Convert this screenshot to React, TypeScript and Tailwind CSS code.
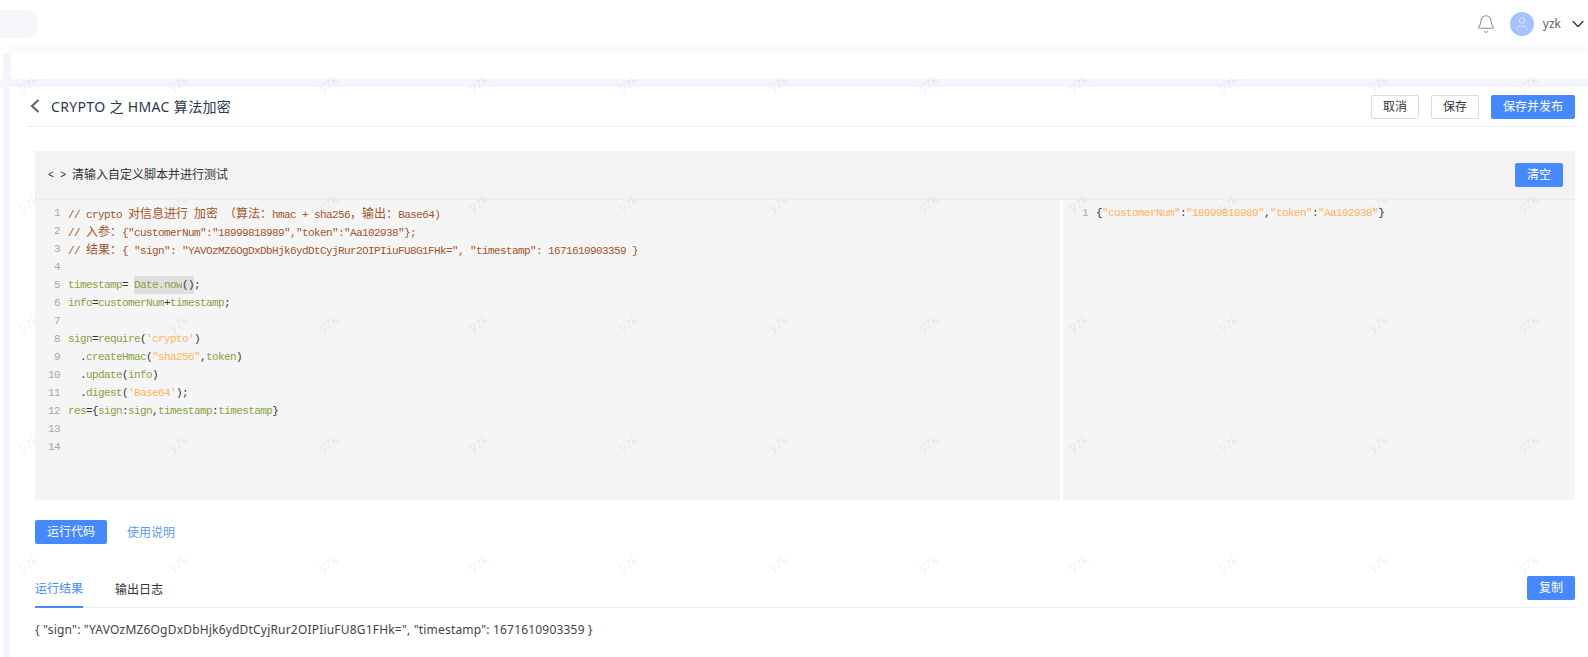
import { Bell, ChevronDown, User } from "lucide-react";

type Tone = "comment" | "green" | "orange" | "plain" | "hl" | "hlPlain";
type Token = [Tone, string];

const toneClass: Record<Tone, string> = {
  comment: "text-[#a0552c]",
  green: "text-[#86a447]",
  orange: "text-[#ffb35c]",
  plain: "text-[#333333]",
  hl: "inline-block h-[18px] bg-[#dfdfdf] text-[#86a447]",
  hlPlain: "inline-block h-[18px] bg-[#dfdfdf] text-[#333333]",
};

const scriptLines: Token[][] = [
  [["comment", "// crypto 对信息进行 加密 （算法：hmac + sha256，输出：Base64)"]],
  [["comment", '// 入参：{"customerNum":"18999818989","token":"Aa102938"};']],
  [["comment", '// 结果：{ "sign": "YAVOzMZ6OgDxDbHjk6ydDtCyjRur2OIPIiuFU8G1FHk=", "timestamp": 1671610903359 }']],
  [],
  [["green", "timestamp"], ["plain", "= "], ["hl", "Date.now"], ["hlPlain", "()"], ["plain", ";"]],
  [["green", "info"], ["plain", "="], ["green", "customerNum"], ["plain", "+"], ["green", "timestamp"], ["plain", ";"]],
  [],
  [["green", "sign"], ["plain", "="], ["green", "require"], ["plain", "("], ["orange", "'crypto'"], ["plain", ")"]],
  [["plain", "  ."], ["green", "createHmac"], ["plain", "("], ["orange", '"sha256"'], ["plain", ","], ["green", "token"], ["plain", ")"]],
  [["plain", "  ."], ["green", "update"], ["plain", "("], ["green", "info"], ["plain", ")"]],
  [["plain", "  ."], ["green", "digest"], ["plain", "("], ["orange", "'Base64'"], ["plain", ");"]],
  [["green", "res"], ["plain", "={"], ["green", "sign"], ["plain", ":"], ["green", "sign"], ["plain", ","], ["green", "timestamp"], ["plain", ":"], ["green", "timestamp"], ["plain", "}"]],
  [],
  [],
];

const inputLines: Token[][] = [
  [
    ["plain", "{"],
    ["orange", '"customerNum"'],
    ["plain", ":"],
    ["orange", '"18999818989"'],
    ["plain", ","],
    ["orange", '"token"'],
    ["plain", ":"],
    ["orange", '"Aa102938"'],
    ["plain", "}"],
  ],
];

// ascii runs on a 6px grid, chinese on 12px
function CodeText({ text }: { text: string }) {
  const parts = text.split(/([\u3000-\u9fff\uff00-\uffef]+)/);
  return (
    <>
      {parts.map((part, i) =>
        i % 2 === 1 ? (
          <span key={i} className="font-['Noto_Sans_CJK_SC',serif] text-[12px] tracking-normal">
            {part}
          </span>
        ) : (
          <span key={i}>{part}</span>
        ),
      )}
    </>
  );
}

function CodePane({ lines, className }: { lines: Token[][]; className: string }) {
  return (
    <div className={`bg-[#f5f5f5] pt-[4px] font-['Liberation_Mono',monospace] text-[11px] leading-[18px] tracking-[-0.6px] ${className}`}>
      {lines.map((tokens, i) => (
        <div key={i} className="flex h-[18px]">
          <span className="w-[25px] shrink-0 text-right text-[#a8a8a8]">{i + 1}</span>
          <span className="ml-[8px] whitespace-pre">
            {tokens.map(([tone, text], j) => (
              <span key={j} className={toneClass[tone]}>
                <CodeText text={text} />
              </span>
            ))}
          </span>
        </div>
      ))}
    </div>
  );
}

function Watermarks() {
  const rows = [83, 203, 323, 443, 563];
  const cols = Array.from({ length: 11 }, (_, i) => i);
  return (
    <div className="pointer-events-none absolute inset-0 z-20 overflow-hidden">
      {rows.map((y) =>
        cols.map((c) => (
          <span
            key={`${y}-${c}`}
            className="absolute -rotate-[30deg] font-['Noto_Sans',sans-serif] text-[14px] leading-none text-black/[0.07]"
            style={{ left: 18 + c * 150, top: y - 7 }}
          >
            yzk
          </span>
        )),
      )}
    </div>
  );
}

const primaryBtn = "h-[24px] rounded-[2px] bg-[#4689ff] text-[12px] text-white";
const ghostBtn = "h-[24px] w-[48px] rounded-[2px] border border-[#dcdcdc] bg-white text-[12px] text-[#333333]";

export default function App() {
  return (
    <div className="relative h-[657px] w-full overflow-hidden bg-white font-['Noto_Sans','Noto_Sans_CJK_SC',sans-serif] text-[#333333]">
      <Watermarks />

      <header className="relative z-10 flex h-[47px] items-center justify-between bg-white shadow-[0_4px_10px_rgba(0,0,0,0.035)]">
        <div className="h-[28px] w-[39px] rounded-r-[14px] bg-[#f5f6fa]" />
        <div className="flex items-center">
          <Bell className="h-[20px] w-[20px] text-[#8f8f8f]" strokeWidth={1.25} />
          <div className="ml-[14px] flex h-[24px] w-[24px] items-center justify-center rounded-full bg-[#a3c2ff]">
            <User className="h-[16px] w-[16px] text-[#e4edff]" strokeWidth={1.25} />
          </div>
          <span className="ml-[9px] text-[12px] text-[#666666]">yzk</span>
          <ChevronDown className="ml-[7px] h-[20px] w-[20px] text-[#333333]" strokeWidth={1.5} />
        </div>
      </header>

      <div className="h-[32px] pl-[3px] pt-[6px]">
        <div className="h-full w-[8px] rounded-t-[2px] bg-[#f3f5fa]" />
      </div>
      <div className="h-[8px] bg-[#f3f5fa]" />

      <div className="flex">
        <div className="ml-[3px] h-[570px] w-[7px] shrink-0 bg-[#f3f5fa]" />
        <main className="ml-[17px] w-[1548px]">
          <div className="flex h-[40px] justify-between border-b border-[#eeeeee] pt-[8px]">
            <div className="flex h-[22px] items-center">
              <svg viewBox="0 0 10 14" className="ml-[3px] h-[14px] w-[10px] text-[#666666]" fill="none" stroke="currentColor" strokeWidth="2.25">
                <path d="M8.5 1 L2 7 L8.5 13" />
              </svg>
              <h1 className="ml-[11px] text-[14px] font-normal tracking-[0.35px] text-[#2c3a4d]">CRYPTO 之 HMAC 算法加密</h1>
            </div>
            <div className="flex gap-[12px]">
              <button className={ghostBtn}>取消</button>
              <button className={ghostBtn}>保存</button>
              <button className={`${primaryBtn} w-[84px]`}>保存并发布</button>
            </div>
          </div>

          <section className="ml-[8px] mt-[24px] h-[349px] bg-[#f3f3f3]">
            <div className="flex h-[49px] items-center justify-between border-b border-[#ebebeb] pl-[13px] pr-[12px]">
              <div className="flex items-center text-[12px] text-[#333333]">
                <span className="w-[24px] whitespace-pre font-['Liberation_Mono',monospace] text-[10px]">&lt; &gt;</span>
                <span>清输入自定义脚本并进行测试</span>
              </div>
              <button className={`${primaryBtn} w-[48px]`}>清空</button>
            </div>
            <div className="flex h-[300px] gap-[3px] bg-white">
              <CodePane lines={scriptLines} className="w-[1025px]" />
              <CodePane lines={inputLines} className="w-[512px]" />
            </div>
          </section>

          <div className="ml-[8px] mt-[20px] flex items-center">
            <button className={`${primaryBtn} w-[72px]`}>运行代码</button>
            <a className="ml-[20px] pt-[2px] text-[12px] text-[#5f95ff]">使用说明</a>
          </div>

          <div className="ml-[8px] mt-[24px] flex h-[40px] items-center justify-between border-b border-[#eeeeee]">
            <div className="flex h-full gap-[32px] text-[12px]">
              <span className="flex h-[40px] items-center border-b-2 border-[#4689ff] pt-[4px] text-[#4689ff]">运行结果</span>
              <span className="flex h-[40px] items-center pt-[4px] text-[#333333]">输出日志</span>
            </div>
            <button className={`${primaryBtn} w-[48px]`}>复制</button>
          </div>

          <p className="ml-[8px] mt-[13px] text-[12px] leading-[18px] tracking-[0.19px] text-[#444444]">
            {'{ "sign": "YAVOzMZ6OgDxDbHjk6ydDtCyjRur2OIPIiuFU8G1FHk=", "timestamp": 1671610903359 }'}
          </p>
        </main>
      </div>
    </div>
  );
}
